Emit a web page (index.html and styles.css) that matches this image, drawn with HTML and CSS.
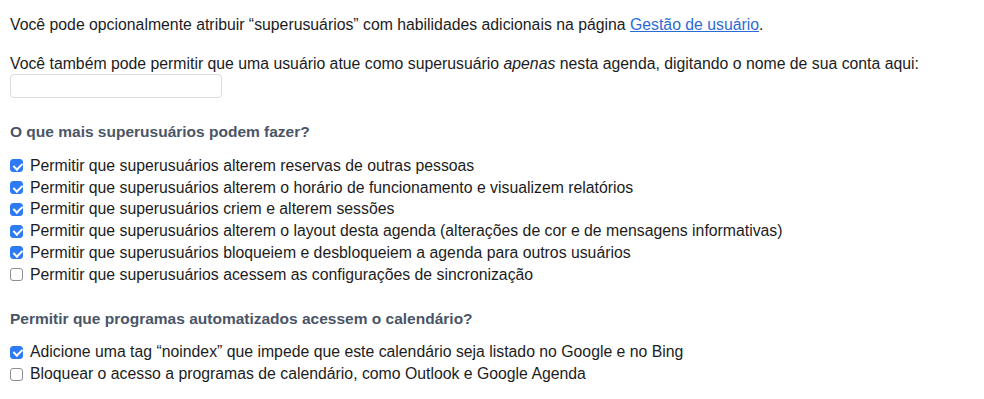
FILE: index.html
```html
<!DOCTYPE html>
<html lang="pt">
<head>
<meta charset="utf-8">
<link rel="stylesheet" href="styles.css">
</head>
<body>
<div class="page">
  <p class="para">Você pode opcionalmente atribuir “superusuários” com habilidades adicionais na página <a href="#" class="link">Gestão de usuário</a>.</p>
  <div class="field">
    <p class="para">Você também pode permitir que uma usuário atue como superusuário <em>apenas</em> nesta agenda, digitando o nome de sua conta aqui:</p>
    <input type="text" class="text-input">
  </div>

  <section class="group">
    <h3 class="group-title">O que mais superusuários podem fazer?</h3>
    <ul class="options">
      <li class="option"><input type="checkbox" class="check" checked><span>Permitir que superusuários alterem reservas de outras pessoas</span></li>
      <li class="option"><input type="checkbox" class="check" checked><span>Permitir que superusuários alterem o horário de funcionamento e visualizem relatórios</span></li>
      <li class="option"><input type="checkbox" class="check" checked><span>Permitir que superusuários criem e alterem sessões</span></li>
      <li class="option"><input type="checkbox" class="check" checked><span>Permitir que superusuários alterem o layout desta agenda (alterações de cor e de mensagens informativas)</span></li>
      <li class="option"><input type="checkbox" class="check" checked><span>Permitir que superusuários bloqueiem e desbloqueiem a agenda para outros usuários</span></li>
      <li class="option"><input type="checkbox" class="check"><span>Permitir que superusuários acessem as configurações de sincronização</span></li>
    </ul>
  </section>

  <section class="group group-second">
    <h3 class="group-title">Permitir que programas automatizados acessem o calendário?</h3>
    <ul class="options">
      <li class="option"><input type="checkbox" class="check" checked><span>Adicione uma tag “noindex” que impede que este calendário seja listado no Google e no Bing</span></li>
      <li class="option"><input type="checkbox" class="check"><span>Bloquear o acesso a programas de calendário, como Outlook e Google Agenda</span></li>
    </ul>
  </section>
</div>
</body>
</html>
```

FILE: styles.css
```css
* { box-sizing: border-box; }
html, body { margin: 0; background: #fff; }
body {
  font-family: "Liberation Sans", Arial, sans-serif;
  font-size: 15.8px;
  line-height: 22px;
  color: #1c1c1e;
}
.page {
  padding: 14px 10px;
  display: flex;
  flex-direction: column;
}
.para { margin: 0; }
.field { margin-top: 17px; display: flex; flex-direction: column; align-items: flex-start; }
.link { color: #2b6bd6; text-decoration: underline; }
.text-input {
  width: 212px;
  height: 24px;
  margin-top: -1px;
  border: 1px solid #dcdcdf;
  border-radius: 4px;
  background: #fff;
  font: inherit;
}
.group { margin-top: 23px; }
.group-second { margin-top: 22px; }
.group-title {
  margin: 0 0 12px;
  font-size: 15.5px;
  line-height: 22px;
  font-weight: bold;
  color: #4a5568;
}
.options { list-style: none; margin: 0; padding: 0; }
.option {
  display: flex;
  align-items: center;
  height: 21.75px;
}
.check {
  appearance: none;
  -webkit-appearance: none;
  width: 13px;
  height: 13px;
  margin: 0 7px 0 0;
  border: 1px solid #8e8e93;
  border-radius: 3px;
  background: #fff;
  flex-shrink: 0;
  position: relative;
}
.check:checked {
  background: #2f7bf5;
  border-color: #2f7bf5;
}
.check:checked::after {
  content: "";
  position: absolute;
  left: 3.5px;
  top: 0.5px;
  width: 3.5px;
  height: 7px;
  border: solid #fff;
  border-width: 0 2px 2px 0;
  transform: rotate(45deg);
}
```
